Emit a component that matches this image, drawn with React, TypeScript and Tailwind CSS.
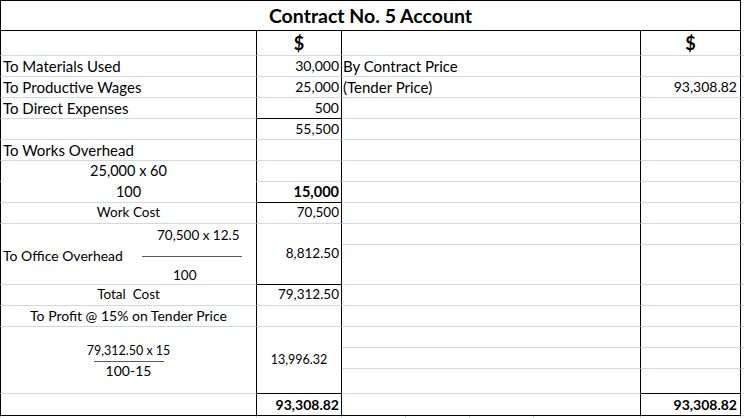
import type { ReactNode } from "react"

// Excel-style contract account sheet
const c1g = "border-l border-r border-b border-l-black border-r-black border-b-[#d0d7e5]"
const c1w = "border-l border-r border-b border-l-black border-r-black border-b-white"
const c1k = "border-l border-r border-b border-black"
const cg = "border-r border-b border-r-black border-b-[#d0d7e5]"
const ck = "border-r border-b border-black"
const sg = "border-b border-b-[#d0d7e5]"

function Cell({ className, children }: { className: string; children?: ReactNode }) {
  return <div className={className}>{children}</div>
}

// plain rows of the right-hand side (col 3 + col 4 + strip)
function RightEmpty({ bottom }: { bottom?: boolean }) {
  return (
    <>
      <Cell className={cg} />
      <Cell className={bottom ? ck : cg} />
      <Cell className={sg} />
    </>
  )
}

export default function App() {
  return (
    <div className="w-[744px] h-[418px] overflow-hidden bg-white text-black [font-family:Lato,sans-serif] text-[15px] leading-none">
      <div className="grid grid-cols-[257px_85px_299px_100px_3px] grid-rows-[31px_25px_21px_21px_21px_21px_21px_21px_21px_21px_21px_40px_21px_21px_21px_21px_25px_22px_3px]">
        {/* title */}
        <div className="col-span-4 flex items-center justify-center border border-black text-[19.5px] font-bold">
          Contract No. 5 Account
        </div>
        <Cell className={sg} />

        {/* $ row */}
        <Cell className={c1g} />
        <div className={`${cg} flex items-center justify-center text-[18px] font-bold`}>$</div>
        <Cell className={cg} />
        <div className={`${cg} flex items-center justify-center text-[18px] font-bold`}>$</div>
        <Cell className={sg} />

        {/* materials */}
        <div className={`${c1g} flex items-center pl-[2px]`}>To Materials Used</div>
        <div className={`${cg} flex items-center justify-end pr-[2px] text-[14px]`}>30,000</div>
        <div className={`${cg} flex items-center pl-[1px]`}>By Contract Price</div>
        <Cell className={cg} />
        <Cell className={sg} />

        {/* wages */}
        <div className={`${c1g} flex items-center pl-[2px]`}>To Productive Wages</div>
        <div className={`${cg} flex items-center justify-end pr-[2px] text-[14px]`}>25,000</div>
        <div className={`${cg} flex items-center pl-[1px]`}>(Tender Price)</div>
        <div className={`${cg} flex items-center justify-end pr-[3px] text-[14px]`}>93,308.82</div>
        <Cell className={sg} />

        {/* direct expenses */}
        <div className={`${c1g} flex items-center pl-[2px]`}>To Direct Expenses</div>
        <div className={`${ck} flex items-center justify-end pr-[2px] text-[14px]`}>500</div>
        <RightEmpty />

        {/* subtotal */}
        <Cell className={c1g} />
        <div className={`${cg} flex items-center justify-end pr-[2px] text-[14px]`}>55,500</div>
        <RightEmpty />

        {/* works overhead */}
        <div className={`${c1g} flex items-center pl-[2px]`}>To Works Overhead</div>
        <Cell className={cg} />
        <RightEmpty />

        <div className={`${c1w} flex items-center justify-center text-[14.5px]`}>25,000 x 60</div>
        <Cell className={cg} />
        <RightEmpty />

        <div className={`${c1g} flex items-center justify-center text-[14.5px]`}>100</div>
        <div className={`${ck} flex items-center justify-end pr-[2px] text-[14.5px] font-bold`}>15,000</div>
        <RightEmpty />

        {/* work cost */}
        <div className={`${c1g} flex items-center justify-center text-[13.5px]`}>Work Cost</div>
        <div className={`${cg} flex items-center justify-end pr-[2px] text-[13.5px]`}>70,500</div>
        <RightEmpty />

        {/* office overhead, two rows merged */}
        <div className={`${c1g} row-span-2 flex flex-col text-[13.5px]`}>
          <div className="flex h-[24px] items-center pl-[156px]">70,500 x 12.5</div>
          <div className="flex h-[16px] items-center">
            <div className="w-[141px] pl-[2px] text-[14px]">To Office Overhead</div>
            <div className="h-px w-[100px] bg-[#5a5a5a]" />
          </div>
          <div className="flex flex-1 items-center pl-[172px] pt-[4px]">100</div>
        </div>
        <div className={`${ck} row-span-2 flex items-center justify-end pr-[2px] text-[13.5px]`}>8,812.50</div>
        <RightEmpty />
        <RightEmpty />

        {/* total cost */}
        <div className={`${c1g} flex items-center justify-center whitespace-pre text-[13.5px]`}>Total  Cost</div>
        <div className={`${cg} flex items-center justify-end pr-[2px] text-[13.5px]`}>79,312.50</div>
        <RightEmpty />

        {/* profit */}
        <div className={`${c1g} flex items-center justify-center text-[14px]`}>To Profit @ 15% on Tender Price</div>
        <Cell className={cg} />
        <RightEmpty />

        <div className={`${c1g} row-span-3 flex flex-col items-center justify-center pt-[1px]`}>
          <div className="text-[12.5px] leading-[17px]">79,312.50 x 15</div>
          <div className="mt-[2px] h-px w-[70px] bg-[#5a5a5a]" />
          <div className="text-[14px] leading-[18px]">100-15</div>
        </div>
        <div className={`${ck} row-span-3 flex items-center justify-center text-[12.5px]`}>13,996.32</div>
        <RightEmpty />
        <RightEmpty />
        <RightEmpty bottom />

        {/* grand total */}
        <Cell className={c1k} />
        <div className={`${ck} flex items-center justify-end pr-[2px] text-[14px] font-bold`}>93,308.82</div>
        <Cell className={ck} />
        <div className={`${ck} flex items-center justify-end pr-[3px] text-[14px] font-bold`}>93,308.82</div>
        <Cell className={sg} />

        {/* next sheet row peeking below */}
        <Cell className="border-l border-r border-[#d0d7e5]" />
        <Cell className="border-r border-[#d0d7e5]" />
        <div className="flex">
          <div className="w-[64px] border-r border-[#d0d7e5]" />
          <div className="w-[64px] border-r border-[#d0d7e5]" />
          <div className="w-[64px] border-r border-[#d0d7e5]" />
          <div className="flex-1 border-r border-[#d0d7e5]" />
        </div>
        <Cell className="border-r border-[#d0d7e5]" />
        <Cell className="" />
      </div>
    </div>
  )
}
